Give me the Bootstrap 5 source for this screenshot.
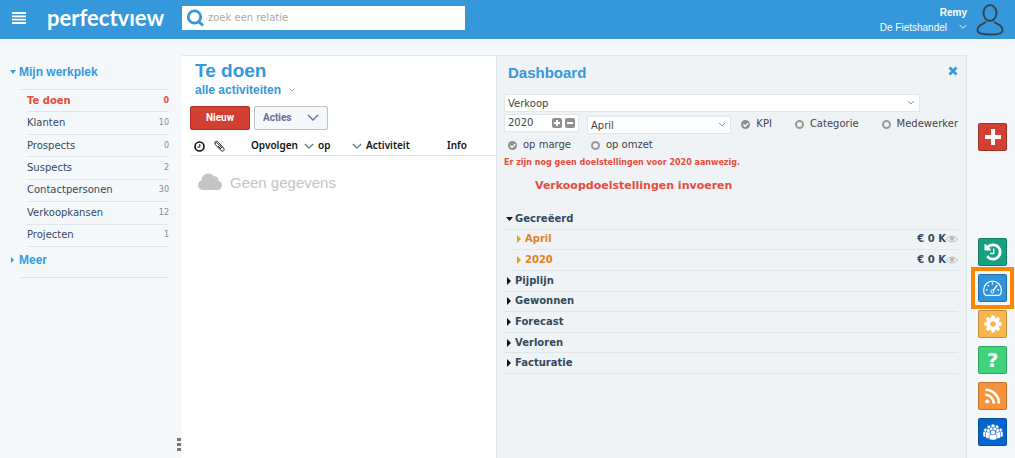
<!DOCTYPE html>
<html lang="nl">
<head>
<meta charset="utf-8">
<meta name="viewport" content="width=device-width, initial-scale=1">
<title>Perfectview – Te doen</title>
<link href="https://cdn.jsdelivr.net/npm/bootstrap@5.3.0/dist/css/bootstrap.min.css" rel="stylesheet">
<style>
:root{--blue:#3498db;--red:#e74c3c;--ink:#34495e;--line:#dfe6ec;--arial:"Liberation Sans",Arial,sans-serif;--noto:"Noto Sans",sans-serif}
body{font-family:"DejaVu Sans",Verdana,sans-serif;font-size:10px;line-height:14px;color:var(--ink);background:#f4f8fb}
a{text-decoration:none;color:inherit}
.topbar{height:39px;background:var(--blue);color:#fff}
.menu-btn{width:38px;height:38px}
.brand{width:144px;font:700 22px/34px Lato,sans-serif;padding-left:9px}
.search{width:283px;height:24px;background:#fff}
.search input{border:0;outline:0;min-width:0;color:#555;background:transparent}
.search input::placeholder{color:#aaa;opacity:1}
.account{font:10px/15px var(--arial)}
.side{width:182px;padding:24px 13px 0 10px}
.side-head{font:700 12px/18px var(--arial);color:var(--blue)}
.side-head svg{width:9px}
.side-list{display:grid;grid-auto-rows:1fr;height:157px;margin-left:17px}
.side-list a,.kpi-row{display:flex;align-items:center;border-bottom:1px solid var(--line)}
.side-list small{margin-left:auto;font-size:8px;color:#7f8c9a}
.side-list .current,.side-list .current small{color:var(--red);font-weight:700}
.rule-in{margin-left:9px;border-bottom:1px solid var(--line)}
.grip{position:absolute;left:177px;bottom:7px}
.panes{display:grid;grid-template-columns:minmax(0,2fr) minmax(0,3fr)}
.pane{border-top:1px solid var(--line)}
.tasks{background:#fff}
.tasks-head{padding-left:13px}
.dash{background:#eff3f6;border-left:1px solid var(--line);border-right:1px solid var(--line);padding:6px 8px 0 7px}
h1{font:700 19px/24px var(--arial);color:var(--blue);margin:3px 0 0}
h2{font:700 15px/22px var(--arial);color:var(--blue);margin:0}
.sub{font:700 12px/14px var(--arial);color:var(--blue)}
.tool{height:24px;border-radius:2px;font:700 10px/14px Roboto,sans-serif;padding:0}
.tool-new{width:60px;background:#d43f33;border:1px solid #b03028;color:#fff}
.tool-act{width:74px;background:#f4f8fb;border:1px solid #bdc3c7;color:#6c6a9c}
.tool-act svg{margin-left:auto}
.tools{padding-top:9px}
.heads{width:100%;font:600 10px/15px var(--noto);color:#111;border-bottom:1px solid var(--line);table-layout:fixed}
.heads th{font-weight:600;padding:0 0 2px;white-space:nowrap}
.empty{font:15px/20px var(--arial);color:#c4c4c4}
.area{padding:10px 38px 2px 0}
.field{height:18px;border:1px solid var(--line);background:#fff;color:#444;font-size:10px;line-height:14px;border-radius:0;padding:1px 3px 0}
select.field{appearance:none;background:#fff url("data:image/svg+xml,%3Csvg xmlns='http://www.w3.org/2000/svg' width='8' height='6'%3E%3Cpath d='M1 1l3 3 3-3' fill='none' stroke='%23999'/%3E%3C/svg%3E") no-repeat right 4px center}
.period{height:20px}
.year{width:75px;padding:0 3px}
.year input{width:41px;border:0;padding:0;outline:0;color:#444;background:transparent}
.step{width:10px;height:10px;border:0;border-radius:2px;background:#8f8f8f;padding:0}
.kinds{gap:23px;padding-left:10px}
.bases{gap:20px}
.pick{display:flex;align-items:center;color:#444;white-space:nowrap}
.pick input{appearance:none;width:9px;height:9px;margin:0 6px 0 0;border:2px solid #999;border-radius:50%}
.pick input:checked{border:0;background:#8f8f8f url("data:image/svg+xml,%3Csvg xmlns='http://www.w3.org/2000/svg' viewBox='0 0 10 10'%3E%3Cpath d='M2.5 5l2 2 3.500-3.500' fill='none' stroke='%23fff' stroke-width='1.500'/%3E%3C/svg%3E")}
.warn{color:var(--red);font-weight:700;font-size:8px;line-height:14px}
.cta{color:var(--red);font-weight:700;font-size:11px;line-height:15px;padding-left:31px}
.kpis{display:grid;grid-auto-rows:1fr;height:165px;font-weight:700}
.kpi-row .tri{width:11px;flex:none}
.kpi-sub{margin-left:10px}
.kpi-sub a{color:#e67e22}
.rail{width:48px;padding:84px 8px 12px 0}
.rail button{width:29px;height:28px;border-radius:2px;border:1px solid rgba(0,0,0,.22);color:#fff;padding:0;display:flex;align-items:center;justify-content:center}
.picked{position:relative}
.picked::after{content:"";position:absolute;inset:-8px;border:4px solid #ff8400}
.help{font:700 20px/24px "DejaVu Sans",sans-serif}
</style>
</head>
<body>
<svg class="d-none" xmlns="http://www.w3.org/2000/svg">
<symbol id="chev" viewBox="0 0 12 8"><path d="M1 1l5 5 5-5" fill="none" stroke="currentColor" stroke-width="1.400"/></symbol>
<symbol id="eye" viewBox="0 0 12 8"><path d="M.5 4C3 .2 9 .2 11.500 4 9 7.800 3 7.800.5 4z" fill="none" stroke="currentColor"/><circle cx="6" cy="3.500" r="2.300" fill="currentColor"/></symbol>
</svg>
<div class="d-flex flex-column min-vh-100">
<header class="topbar d-flex align-items-center">
  <button class="menu-btn btn p-0 pb-1 text-white rounded-0 border-0" aria-label="Menu"><svg width="14" height="12" viewBox="0 0 14 12"><path d="M0 1h14M0 4.300h14M0 7.700h14M0 11h14" stroke="#fff" stroke-width="1.800"/></svg></button>
  <a class="brand mb-1" href="#" aria-label="perfectview">perfectvıew</a>
  <form class="search d-flex align-items-center mb-1">
    <svg class="mx-1 flex-shrink-0" width="18" height="18" viewBox="0 0 18 18" fill="none" stroke="#3498db"><circle cx="8.500" cy="8" r="6.200" stroke-width="2.800"/><path d="M12.500 12.500l4.500 4" stroke-width="3"/></svg>
    <input class="flex-grow-1 p-0" type="text" placeholder="zoek een relatie" aria-label="Zoek een relatie">
  </form>
  <div class="account ms-auto text-end d-flex flex-column">
    <strong>Remy</strong>
    <a href="#" class="d-flex align-items-center">De Fietshandel<svg class="ms-2 ps-1" width="12" height="6"><use href="#chev"/></svg></a>
  </div>
  <svg class="ms-2 me-2 flex-shrink-0" width="32" height="34" viewBox="0 0 32 34" fill="none" stroke="#34434f" stroke-width="1.800"><ellipse cx="15" cy="10" rx="6.500" ry="8"/><path d="M11 18.500c-1 3-8.500 2-8.500 8.500 0 4.500 7 4.500 12.500 4.500s12.500 0 12.500-4.500c0-6.500-7.500-5.500-8.500-8.500"/></svg>
</header>
<div class="d-flex flex-grow-1 position-relative">
  <nav class="side flex-shrink-0">
    <a class="side-head d-flex align-items-center" href="#"><svg height="4" viewBox="0 0 9 4"><path d="M0 0h6L3 4z" fill="currentColor"/></svg>Mijn werkplek</a>
    <div class="rule-in pt-1 mt-1"></div>
    <div class="side-list">
      <a class="current" href="#">Te doen<small>0</small></a>
      <a href="#">Klanten<small>10</small></a>
      <a href="#">Prospects<small>0</small></a>
      <a href="#">Suspects<small>2</small></a>
      <a href="#">Contactpersonen<small>30</small></a>
      <a href="#">Verkoopkansen<small>12</small></a>
      <a href="#">Projecten<small>1</small></a>
    </div>
    <a class="side-head d-flex align-items-center pt-1" href="#"><svg height="6" viewBox="0 0 9 6"><path d="M1 0l3 3-3 3z" fill="currentColor"/></svg>Meer</a>
    <div class="rule-in pt-2"></div>
  </nav>
  <svg class="grip" width="4" height="13" fill="#777"><path d="M0 0h4v3H0zM0 5h4v3H0zM0 10h4v3H0z"/></svg>
  <div class="panes flex-grow-1 mt-3">
  <main class="tasks pane">
    <div class="tasks-head">
      <h1>Te doen</h1>
      <a class="sub d-flex align-items-center" href="#">alle activiteiten<svg class="ms-2" width="6" height="4"><use href="#chev"/></svg></a>
    </div>
    <div class="tools d-flex gap-1 ps-2">
      <button class="btn tool tool-new">Nieuw</button>
      <button class="btn tool tool-act d-flex align-items-center ps-2 pe-1" type="button">Acties<svg class="me-1" width="12" height="8"><use href="#chev"/></svg></button>
    </div>
    <div class="ms-2 pt-2">
    <table class="heads">
      <colgroup><col style="width:20px"><col style="width:41px"><col style="width:53px"><col style="width:48px"><col style="width:95px"><col></colgroup>
      <thead><tr>
        <th aria-label="Tijd"><svg class="ms-1" width="11" height="11" viewBox="0 0 11 11" fill="none" stroke="#111"><circle cx="5.500" cy="5.500" r="4.500" stroke-width="1.600"/><path d="M5.800 3v3H3.500"/></svg></th>
        <th aria-label="Bijlage"><svg class="ms-1" width="11" height="12" viewBox="0 0 11 12" fill="none" stroke="#222"><path d="M8 8L3.500 3.300C2 1.800.3 3.500 1.700 5l5.300 5.500c2 1.800 4.300-.5 2.500-2.500L4.500 2.300C2.800.3.300 1.500 1 3.500M4 6l3 3"/></svg></th>
        <th>Opvolgen</th>
        <th><svg class="me-1 text-secondary" width="10" height="7"><use href="#chev"/></svg>op</th>
        <th><svg class="me-1 text-secondary" width="10" height="7"><use href="#chev"/></svg>Activiteit</th>
        <th>Info</th>
      </tr></thead>
    </table>
    </div>
    <div class="empty d-flex align-items-center ps-3 pt-3"><svg class="me-2 mb-1" width="24" height="18" viewBox="0 0 24 18" fill="#c4c4c4"><path d="M5 18a5 5 0 0 1-1.500-9.700A7 7 0 0 1 16 4.200a4 4 0 0 1 4.500 4.600A4.700 4.700 0 0 1 19 18z"/></svg>Geen gegevens</div>
  </main>
  <section class="dash pane">
    <div class="d-flex ps-1"><h2>Dashboard</h2><button class="btn p-0 pt-1 border-0 ms-auto d-flex align-self-start" aria-label="Sluiten"><svg width="10" height="10" viewBox="0 0 10 10"><path d="M1.500 1.500l7 7m0-7l-7 7" stroke="#3498db" stroke-width="2.800"/></svg></button></div>
    <div class="area"><select class="field w-100 d-block" aria-label="Onderdeel"><option>Verkoop</option></select></div>
    <div class="period d-flex">
      <div class="field year d-flex align-items-center justify-content-between me-2"><input type="text" value="2020" aria-label="Jaar"><button class="step d-flex" aria-label="Meer"><svg width="10" height="10"><path d="M2 5h6M5 2v6" stroke="#fff" stroke-width="2"/></svg></button><button class="step d-flex" aria-label="Minder"><svg width="10" height="10"><path d="M2 5h6" stroke="#fff" stroke-width="2"/></svg></button></div>
      <select class="field flex-grow-1 align-self-end" aria-label="Maand"><option>April</option></select>
      <div class="d-flex kinds">
        <label class="pick"><input type="radio" name="soort" checked>KPI</label>
        <label class="pick"><input type="radio" name="soort">Categorie</label>
        <label class="pick"><input type="radio" name="soort">Medewerker</label>
      </div>
    </div>
    <div class="bases d-flex ps-1 pt-1">
      <label class="pick"><input type="radio" name="basis" checked>op marge</label>
      <label class="pick"><input type="radio" name="basis">op omzet</label>
    </div>
    <div class="warn pt-1">Er zijn nog geen doelstellingen voor 2020 aanwezig.</div>
    <a class="cta d-block pt-2" href="#">Verkoopdoelstellingen invoeren</a>
    <div class="kpis mt-3">
      <div class="kpi-row"><svg class="tri" height="4" viewBox="-2 0 11 4"><path d="M0 0h7L3.500 4z" fill="#111"/></svg><a href="#">Gecreëerd</a></div>
      <div class="kpi-row kpi-sub"><svg class="tri" height="8" viewBox="-3 0 11 8"><path d="M0 0l4 4-4 4z" fill="#f39c12"/></svg><a href="#">April</a><span class="ms-auto">€ 0 K</span><svg width="12" height="8" color="#bbb"><use href="#eye"/></svg></div>
      <div class="kpi-row kpi-sub"><svg class="tri" height="8" viewBox="-3 0 11 8"><path d="M0 0l4 4-4 4z" fill="#f39c12"/></svg><a href="#">2020</a><span class="ms-auto">€ 0 K</span><svg width="12" height="8" color="#bbb"><use href="#eye"/></svg></div>
      <div class="kpi-row"><svg class="tri" height="8" viewBox="-3 0 11 8"><path d="M0 0l4 4-4 4z" fill="#111"/></svg><a href="#">Pijplijn</a></div>
      <div class="kpi-row"><svg class="tri" height="8" viewBox="-3 0 11 8"><path d="M0 0l4 4-4 4z" fill="#111"/></svg><a href="#">Gewonnen</a></div>
      <div class="kpi-row"><svg class="tri" height="8" viewBox="-3 0 11 8"><path d="M0 0l4 4-4 4z" fill="#111"/></svg><a href="#">Forecast</a></div>
      <div class="kpi-row"><svg class="tri" height="8" viewBox="-3 0 11 8"><path d="M0 0l4 4-4 4z" fill="#111"/></svg><a href="#">Verloren</a></div>
      <div class="kpi-row"><svg class="tri" height="8" viewBox="-3 0 11 8"><path d="M0 0l4 4-4 4z" fill="#111"/></svg><a href="#">Facturatie</a></div>
    </div>
  </section>
  </div>
  <aside class="rail flex-shrink-0 d-flex flex-column align-items-end gap-2">
    <button style="background:#d43f33" aria-label="Toevoegen"><svg width="16" height="16"><path d="M0 8h16M8 0v16" stroke="#fff" stroke-width="4"/></svg></button>
    <button class="mt-auto" style="background:#18a085" aria-label="Geschiedenis"><svg width="20" height="20" viewBox="0 0 1792 1792" fill="#fff"><path d="M1664 896q0 156-61 298t-164 245-245 164-298 61q-172 0-327-72.500t-264-204.500q-7-10-6.500-22.500t8.500-20.500l137-138q10-9 25-9 16 2 23 12 73 95 179 147t225 52q104 0 198.500-40.500t163.500-109.500 109.500-163.500 40.500-198.500-40.500-198.500-109.500-163.500-163.500-109.500-198.500-40.500q-98 0-188 35.500t-160 101.500l137 138q31 30 14 69-17 40-59 40h-448q-26 0-45-19t-19-45v-448q0-42 40-59 39-17 69 14l130 129q107-101 244.500-156.500t284.500-55.500q156 0 298 61t245 164 164 245 61 298zm-640-288v448q0 14-9 23t-23 9h-320q-14 0-23-9t-9-23v-64q0-14 9-23t23-9h224v-352q0-14 9-23t23-9h64q14 0 23 9t9 23z"/></svg></button>
    <button class="picked" style="background:#2e93dc" aria-label="Dashboard"><svg width="19" height="16" viewBox="0 0 19 16" fill="none" stroke="#fff"><path d="M3 15.300C1.500 15 .7 12.500.7 10a8.800 8.800 0 0 1 17.600 0c0 2.500-.8 5-2.300 5.300z" stroke-width="1.200"/><circle cx="9.300" cy="11.500" r="1.500"/><path d="M10.300 10.500l4-5.500M9.500 2.500v2M3 10h1.500M14.500 10H16M4.800 5.300l1 1" stroke-width="1.300"/></svg></button>
    <button style="background:#f7b54c" aria-label="Instellingen"><svg width="20" height="20" viewBox="0 0 1792 1792" fill="#fff"><path d="M1152 896q0-106-75-181t-181-75-181 75-75 181 75 181 181 75 181-75 75-181zm512-109v222q0 12-8 23t-20 13l-185 28q-19 54-39 91 35 50 107 138 10 12 10 25t-9 23q-27 37-99 108t-94 71q-12 0-26-9l-138-108q-44 23-91 38-16 136-29 186-7 28-36 28h-222q-14 0-24.500-8.500t-11.500-21.500l-28-184q-49-16-90-37l-141 107q-10 9-25 9-14 0-25-11-126-114-165-168-7-10-7-23 0-12 8-23 15-21 51-66.500t54-70.500q-27-50-41-99l-183-27q-13-2-21-12.500t-8-23.500v-222q0-12 8-23t19-13l186-28q14-46 39-92-40-57-107-138-10-12-10-24 0-10 9-23 26-36 98.500-107.500t94.500-71.500q13 0 26 10l138 107q44-23 91-38 16-136 29-186 7-28 36-28h222q14 0 24.500 8.500t11.500 21.500l28 184q49 16 90 37l142-107q9-9 24-9 13 0 25 10 129 119 165 170 7 8 7 22 0 12-8 23-15 21-51 66.500t-54 70.500q26 50 41 98l183 28q13 2 21 12.500t8 23.500z"/></svg></button>
    <button class="help" style="background:#3fd47c" aria-label="Help">?</button>
    <button style="background:#f69239" aria-label="Nieuws"><svg width="16" height="16" viewBox="0 0 16 16" fill="none" stroke="#fff" stroke-width="2.600"><circle cx="2.200" cy="13.500" r="2.100" fill="#fff" stroke="none"/><path d="M.3 6.800a8.400 8.400 0 0 1 8.400 8.700M.3 1.800a13.500 13.500 0 0 1 13.600 13.700"/></svg></button>
    <button style="background:#0466cc" aria-label="Relaties"><svg width="20" height="16" viewBox="0 0 20 16" fill="#fff" stroke="#0466cc" stroke-width=".5"><rect x="0" y="7" width="4" height="6" rx="1.500"/><rect x="16" y="7" width="4" height="6" rx="1.500"/><rect x="2.500" y="7" width="5" height="7.500" rx="2"/><rect x="12.500" y="7" width="5" height="7.500" rx="2"/><rect x="6" y="10" width="8" height="6" rx="2.500"/><circle cx="2.500" cy="6" r="1.800"/><circle cx="17.500" cy="6" r="1.800"/><circle cx="6" cy="3" r="1.900"/><circle cx="14" cy="3" r="1.900"/><circle cx="10" cy="2" r="2"/><circle cx="5.500" cy="6.500" r="2"/><circle cx="14.500" cy="6.500" r="2"/><circle cx="8.300" cy="5" r="1.800"/><circle cx="11.700" cy="5" r="1.800"/><circle cx="10" cy="8.500" r="2.400"/></svg></button>
  </aside>
</div>
</div>
<script src="https://cdn.jsdelivr.net/npm/bootstrap@5.3.0/dist/js/bootstrap.bundle.min.js"></script>
</body>
</html>
